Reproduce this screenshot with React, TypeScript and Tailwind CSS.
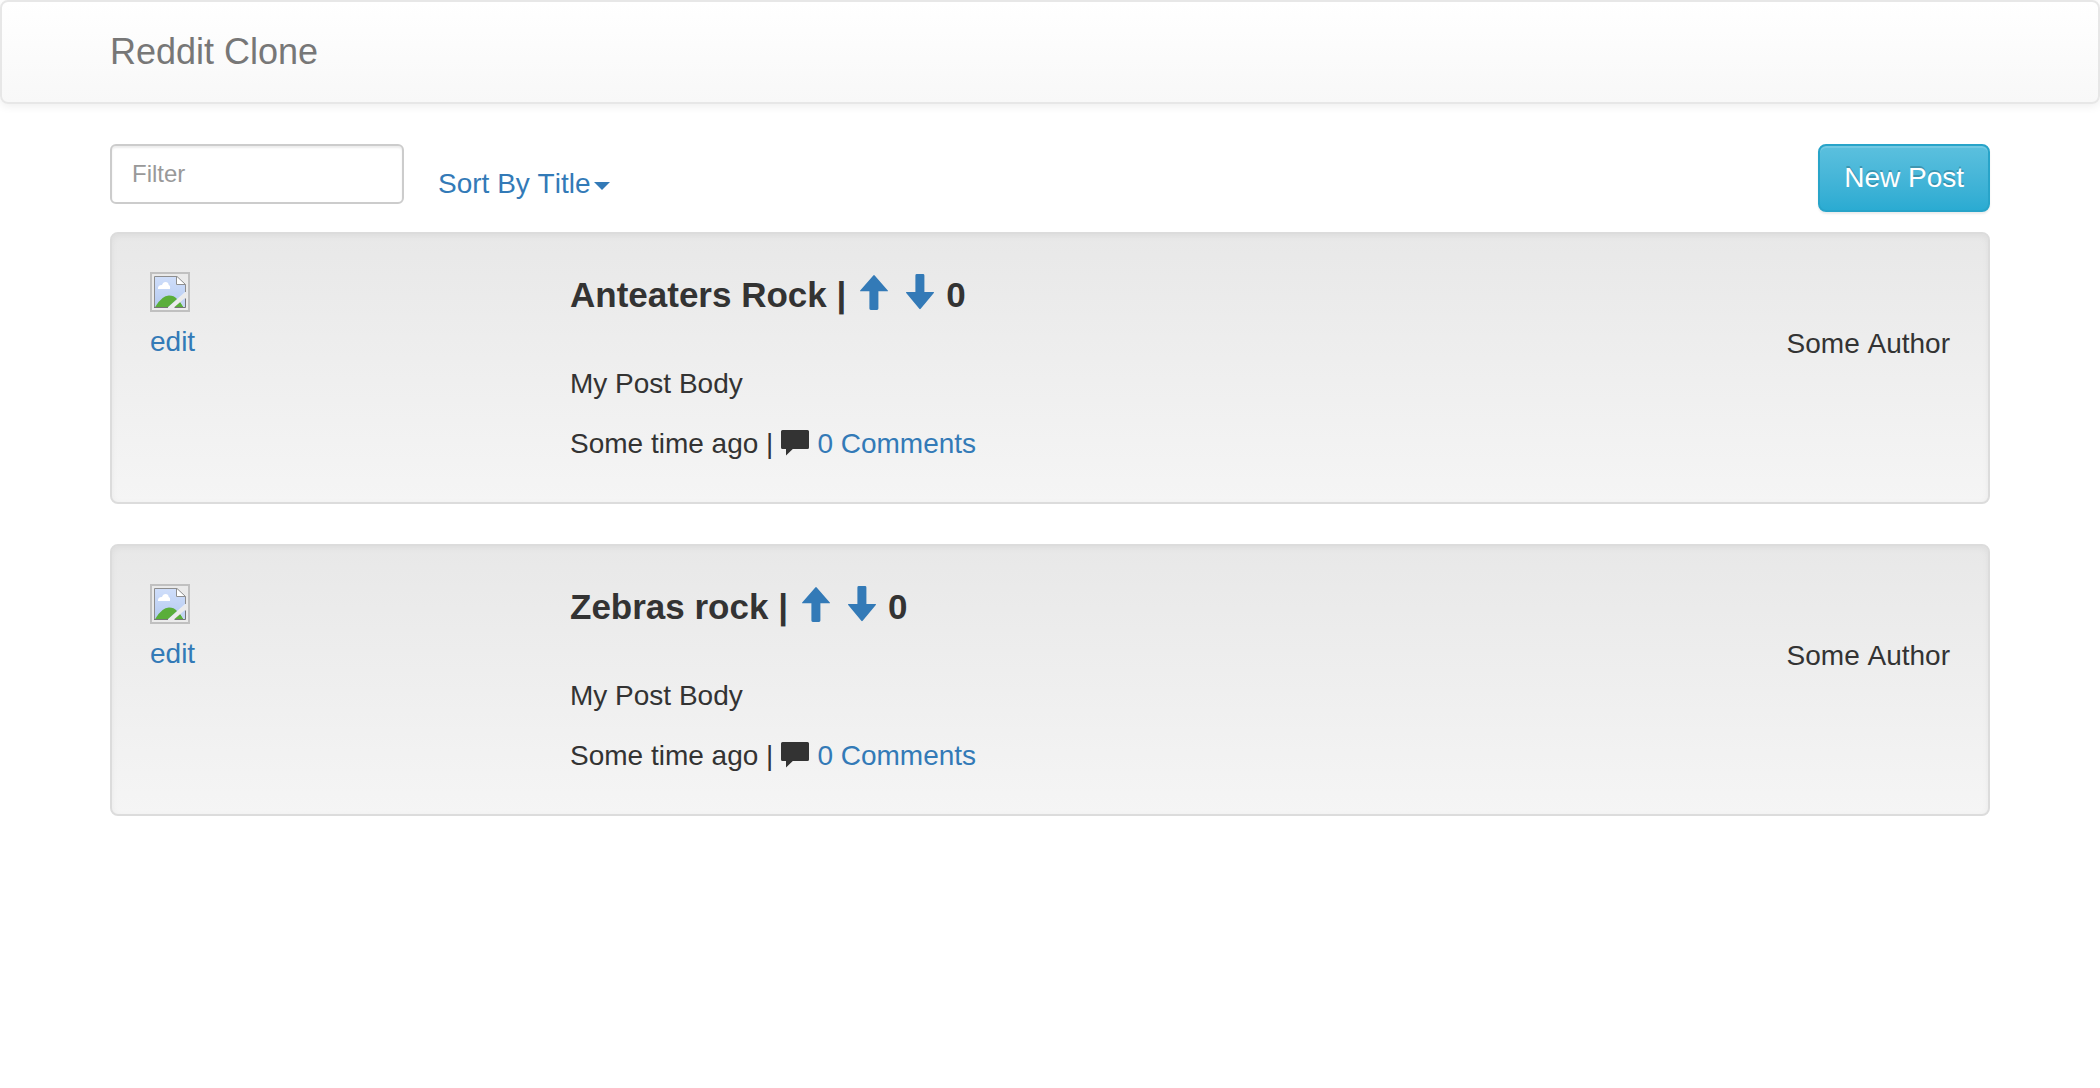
import { useState } from "react";

type Post = { id: number; title: string; body: string; author: string; comments: number };

const posts: Post[] = [
  { id: 1, title: "Anteaters Rock", body: "My Post Body", author: "Some Author", comments: 0 },
  { id: 2, title: "Zebras rock", body: "My Post Body", author: "Some Author", comments: 0 },
];

function ArrowUp() {
  return (
    <svg className="h-9 w-7" viewBox="0 0 28 36" fill="currentColor" aria-hidden="true">
      <path d="M13.3 1.4Q14 .6 14.7 1.4L27.8 16.4Q28.4 17.3 27.4 17.3H18.4V34.6Q18.4 36 17 36H10.8Q9.4 36 9.4 34.6V17.3H.6Q-.4 17.3.2 16.4Z" />
    </svg>
  );
}

function ArrowDown() {
  return (
    <svg className="h-9 w-7" viewBox="0 0 28 36" fill="currentColor" aria-hidden="true">
      <path d="M13.3 34.8Q14 35.6 14.7 34.8L27.8 19Q28.4 18 27.4 18H18.4V1.4Q18.4 0 17 0H10.8Q9.4 0 9.4 1.4V18H.6Q-.4 18 .2 19Z" />
    </svg>
  );
}

function CommentIcon() {
  return (
    <svg className="h-7 w-7" viewBox="0 0 28 28" fill="currentColor" aria-hidden="true">
      <path d="M1.5 0H26.5Q28 0 28 1.5V17.5Q28 19 26.5 19H11.8L5 25.6V19H1.5Q0 19 0 17.5V1.5Q0 0 1.5 0Z" />
    </svg>
  );
}

function Thumbnail() {
  return (
    <svg className="block size-10" viewBox="0 0 40 40" role="img" aria-label="Missing thumbnail">
      <defs>
        <linearGradient id="sky" x1="0" y1="0" x2="0" y2="1">
          <stop offset="0" stopColor="#cfdefa" />
          <stop offset="1" stopColor="#b5caf0" />
        </linearGradient>
      </defs>
      <rect x="1" y="1" width="38" height="38" fill="none" stroke="#c0c0c0" strokeWidth="2" />
      <path d="M4.5 4.5H26.5L35.5 13V20L18 35.5H4.5Z" fill="#e3ecfd" />
      <path d="M5 5H26V13H35V20L18 35H5Z" fill="url(#sky)" />
      <path d="M8 17Q7.6 13 12 13Q13 10 15.5 10Q18.5 10 18.7 13Q20.6 13.6 20 17Z" fill="#fff" />
      <path d="M5.2 35Q12 23.6 19 23.6Q24 23.6 27 27L18 35Z" fill="#5aae3a" />
      <path d="M24.5 35L30.3 30L33.5 35Z" fill="#5aae3a" />
      <path d="M35 26V35H33.5L30.3 30Z" fill="#c3d4f4" />
      <path d="M26.5 4.5V12.5H35.5Z" fill="#fff" />
      <path d="M35.5 20V12.5L27 4.5H4.5V35.5" fill="none" stroke="#8e8e8e" />
      <path d="M26.5 4.5V12.5H35.5" fill="none" stroke="#8e8e8e" />
      <path d="M4 35.5H18M24.5 35.5H35.5V26.5" fill="none" stroke="#757575" />
    </svg>
  );
}

function PostCard({ post }: { post: Post }) {
  const [votes, setVotes] = useState(0);
  return (
    <article className="mb-10 flex items-start rounded-lg border-2 border-[#dcdcdc] bg-linear-to-b from-[#e8e8e8] to-[#f5f5f5] p-[38px] shadow-[inset_0_2px_6px_rgba(0,0,0,0.05),0_2px_0_rgba(255,255,255,0.1)]">
      <div className="w-[420px] shrink-0">
        <Thumbnail />
        <a href="#edit" className="mt-[10px] block w-fit text-[#337ab7]">edit</a>
      </div>
      <div className="min-w-0 flex-1">
        <h4 className="flex h-10 items-center gap-[10px] text-[35px] leading-10 font-bold">
          <span className="mt-[6px]">{post.title} |</span>
          <button type="button" aria-label="Vote up" onClick={() => setVotes(votes + 1)} className="ml-1 text-[#337ab7]">
            <ArrowUp />
          </button>
          <button type="button" aria-label="Vote down" onClick={() => setVotes(votes - 1)} className="ml-2 text-[#337ab7]">
            <ArrowDown />
          </button>
          <span className="mt-[6px] ml-0.5">{votes}</span>
        </h4>
        <p className="mt-[52px]">{post.body}</p>
        <p className="mt-5 flex items-center gap-2">
          <span>Some time ago |</span>
          <CommentIcon />
          <a href="#comments" className="text-[#337ab7]">{post.comments} Comments</a>
        </p>
      </div>
      <p className="mt-[52px]">{post.author}</p>
    </article>
  );
}

export default function App() {
  const [filter, setFilter] = useState("");
  const shown = posts.filter((p) => p.title.toLowerCase().includes(filter.toLowerCase()));
  return (
    <div className="min-h-screen bg-white font-['Liberation_Sans',Arial,sans-serif] text-[28px] leading-10 text-[#333] [font-kerning:none]">
      <nav className="rounded-lg border-2 border-[#e7e7e7] bg-linear-to-b from-white to-[#f8f8f8] shadow-[inset_0_2px_0_rgba(255,255,255,0.15),0_2px_10px_rgba(0,0,0,0.075)]">
        <div className="mx-auto flex h-[100px] max-w-[1940px] items-center px-[30px]">
          <a href="#home" className="text-4xl leading-10 text-[#777]">Reddit Clone</a>
        </div>
      </nav>
      <main className="mx-auto mt-10 max-w-[1940px] px-[30px]">
        <div className="mb-5 flex items-start">
          <input
            type="text"
            aria-label="Filter"
            placeholder="Filter"
            value={filter}
            onChange={(e) => setFilter(e.target.value)}
            className="h-[60px] w-[294px] rounded-md border-2 border-[#ccc] bg-white px-5 text-2xl shadow-[inset_0_2px_2px_rgba(0,0,0,0.075)] placeholder:text-[#999]"
          />
          <button type="button" className="mt-5 ml-[34px] flex items-center gap-1 text-[#337ab7] [font-kerning:none]">
            Sort By Title
            <span className="mt-1 border-x-8 border-t-8 border-x-transparent border-t-[#337ab7]" />
          </button>
          <button
            type="button"
            className="ml-auto rounded-lg border-2 border-[#28a4c9] bg-linear-to-b from-[#5bc0de] to-[#2aabd2] px-6 py-3 text-white shadow-[inset_0_2px_0_rgba(255,255,255,0.15),0_2px_2px_rgba(0,0,0,0.075)] [font-kerning:none] [text-shadow:0_-2px_0_rgba(0,0,0,0.2)]"
          >
            New Post
          </button>
        </div>
        {shown.map((p) => (
          <PostCard key={p.id} post={p} />
        ))}
      </main>
    </div>
  );
}
